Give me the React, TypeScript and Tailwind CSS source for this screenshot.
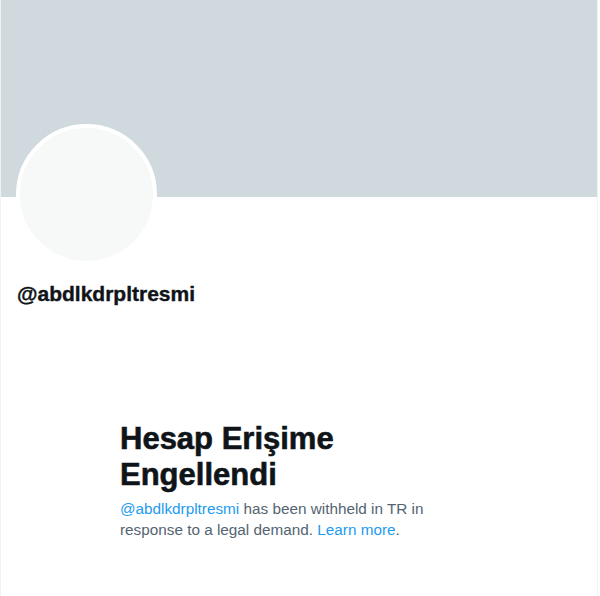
export default function App() {
  return (
    <div className="min-h-[596px] w-[600px] bg-white" style={{ fontFamily: '"Liberation Sans", Arial, sans-serif' }}>
      <div className="min-h-[596px] w-[598px] border-x border-[#eff3f4]">
        {/* header banner */}
        <div className="h-[197px] w-full bg-[#cfd9de]" />

        {/* avatar overlapping the banner */}
        <div className="ml-[15px] mt-[-73px] h-[141px] w-[141px] rounded-full border-4 border-white bg-[#f7f9f9]" />

        <div className="ml-[16px] mt-[17px] text-[21px] font-bold leading-[24px] text-[#0f1419] [-webkit-text-stroke:0.4px_#0f1419]">
          @abdlkdrpltresmi
        </div>

        {/* withheld notice */}
        <div className="ml-[119px] mt-[115px] w-[336px]">
          <h1 className="text-[31px] font-bold leading-[36px] text-[#0f1419] [-webkit-text-stroke:0.6px_#0f1419]">
            Hesap Erişime Engellendi
          </h1>
          <p className="mt-[5px] text-[15.3px] leading-[21px] text-[#536471]">
            <span className="text-[#1d9bf0]">@abdlkdrpltresmi</span> has been withheld in TR in response to a legal demand.{' '}
            <span className="text-[#1d9bf0]">Learn more</span>.
          </p>
        </div>
      </div>
    </div>
  );
}
